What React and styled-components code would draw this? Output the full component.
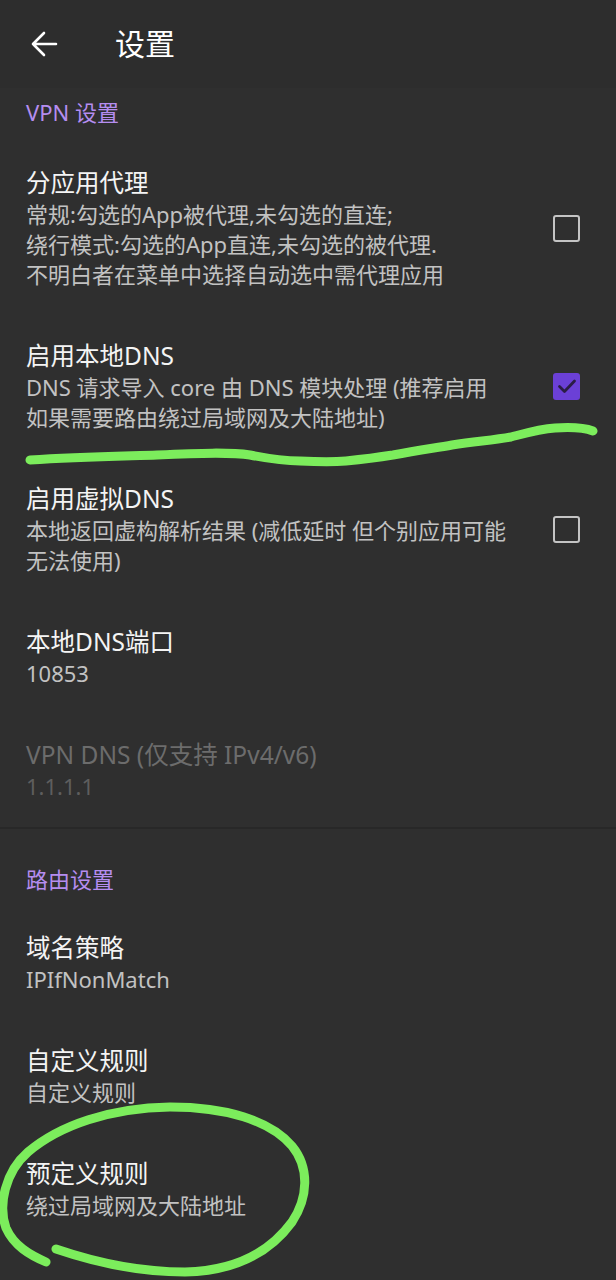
import React from "react";
import styled, { createGlobalStyle } from "styled-components";

const GlobalStyle = createGlobalStyle`
  body {
    margin: 0;
    background: #2f2f2f;
    font-family: "Noto Sans", "Noto Sans CJK SC", sans-serif;
  }
`;

const prefs = [
  {
    category: "VPN 设置",
    items: [
      {
        title: "分应用代理",
        summary: [
          "常规:勾选的App被代理,未勾选的直连;",
          "绕行模式:勾选的App直连,未勾选的被代理.",
          "不明白者在菜单中选择自动选中需代理应用",
        ],
        check: false,
      },
      {
        title: "启用本地DNS",
        summary: [
          "DNS 请求导入 core 由 DNS 模块处理 (推荐启用",
          "如果需要路由绕过局域网及大陆地址)",
        ],
        check: true,
      },
      {
        title: "启用虚拟DNS",
        summary: [
          "本地返回虚构解析结果 (减低延时 但个别应用可能",
          "无法使用)",
        ],
        check: false,
      },
      { title: "本地DNS端口", summary: ["10853"] },
      { title: "VPN DNS (仅支持 IPv4/v6)", summary: ["1.1.1.1"], disabled: true },
    ],
  },
  {
    category: "路由设置",
    items: [
      { title: "域名策略", summary: ["IPIfNonMatch"] },
      { title: "自定义规则", summary: ["自定义规则"] },
      { title: "预定义规则", summary: ["绕过局域网及大陆地址"] },
    ],
  },
];

const App = () => {
  return (
    <Page>
      <GlobalStyle />
      <Toolbar>
        <BackButton>
          <svg width="28" height="26" viewBox="0 0 28 26" fill="none">
            <path
              d="M26 13H3M14 2 3 13l11 11"
              stroke="#fff"
              strokeWidth="2.6"
              strokeLinecap="round"
              strokeLinejoin="round"
            />
          </svg>
        </BackButton>
        <Title>设置</Title>
      </Toolbar>

      {prefs.map((cat, ci) => (
        <Category key={cat.category} $first={ci === 0}>
          <CategoryTitle $first={ci === 0}>{cat.category}</CategoryTitle>
          {cat.items.map((item) => (
            <Item key={item.title}>
              <ItemText>
                <ItemTitle $disabled={item.disabled}>{item.title}</ItemTitle>
                {item.summary.map((line) => (
                  <Summary key={line} $disabled={item.disabled}>
                    {line}
                  </Summary>
                ))}
              </ItemText>
              {item.check !== undefined && (
                <CheckBox $checked={item.check}>
                  {item.check && (
                    <svg width="22" height="22" viewBox="0 0 22 22" fill="none">
                      <path
                        d="M3.5 11.5 8.5 16.5 18.5 6"
                        stroke="#2b1d45"
                        strokeWidth="2.8"
                        strokeLinecap="round"
                        strokeLinejoin="round"
                      />
                    </svg>
                  )}
                </CheckBox>
              )}
            </Item>
          ))}
        </Category>
      ))}

      <Marks width="616" height="1280" viewBox="0 0 616 1280" fill="none">
        <path
          d="M30 460 C80 457 130 456 157 455 C200 453 230 452 250 455 C270 459 285 461 300 461 C320 462 335 462 346 461 C365 459 380 457 393 455 C420 450 435 448 452 445 C480 441 495 440 511 437 C530 432 540 429 555 428 C570 427 585 428 593 431"
          stroke="#7ced5c"
          strokeWidth="9"
          strokeLinecap="round"
          strokeLinejoin="round"
        />
        <path
          d="M56 1249 C100 1264 140 1272 185 1272 C235 1271 270 1252 292 1222 C308 1198 310 1168 292 1146 C270 1120 225 1107 170 1107 C110 1108 60 1125 28 1152 C5 1172 -2 1205 6 1228 C14 1246 30 1255 46 1262"
          stroke="#7ced5c"
          strokeWidth="9"
          strokeLinecap="round"
          strokeLinejoin="round"
        />
      </Marks>
    </Page>
  );
};

export default App;

const Page = styled.div`
  position: relative;
  width: 616px;
  min-height: 1280px;
  background: #2f2f2f;
  overflow: hidden;
`;

const Toolbar = styled.div`
  display: flex;
  align-items: center;
  height: 88px;
  background: #2d2d2d;
`;

const BackButton = styled.div`
  display: flex;
  align-items: center;
  justify-content: center;
  width: 28px;
  height: 26px;
  margin-left: 30px;
  margin-right: 57px;
`;

const Title = styled.h1`
  margin: 0;
  font-size: 30px;
  font-weight: 400;
  color: #ffffff;
  line-height: 40px;
`;

const Category = styled.section`
  display: flex;
  flex-direction: column;
  border-top: ${(p) => (p.$first ? "none" : "2px solid #282828")};
`;

const CategoryTitle = styled.div`
  padding: ${(p) => (p.$first ? "9px 26px 15px" : "35px 26px 13px")};
  font-size: 22px;
  line-height: 30px;
  color: #b58df0;
`;

const Item = styled.div`
  display: flex;
  align-items: center;
  justify-content: space-between;
  padding: 25px 36px 26px 26px;
`;

const ItemText = styled.div`
  display: flex;
  flex-direction: column;
`;

const ItemTitle = styled.div`
  font-size: 24.5px;
  line-height: 32px;
  color: ${(p) => (p.$disabled ? "#6c6c6c" : "#f4f4f4")};
`;

const Summary = styled.div`
  font-size: 22px;
  line-height: 30px;
  color: ${(p) => (p.$disabled ? "#5e5e5e" : "#c2c2c2")};
  white-space: nowrap;
`;

const CheckBox = styled.div`
  flex: none;
  display: flex;
  align-items: center;
  justify-content: center;
  box-sizing: border-box;
  width: 27px;
  height: 27px;
  border-radius: 3px;
  border: ${(p) => (p.$checked ? "none" : "2.5px solid #c4c4c4")};
  background: ${(p) => (p.$checked ? "#6b40d6" : "transparent")};
`;

const Marks = styled.svg`
  position: absolute;
  top: 0;
  left: 0;
  pointer-events: none;
`;
